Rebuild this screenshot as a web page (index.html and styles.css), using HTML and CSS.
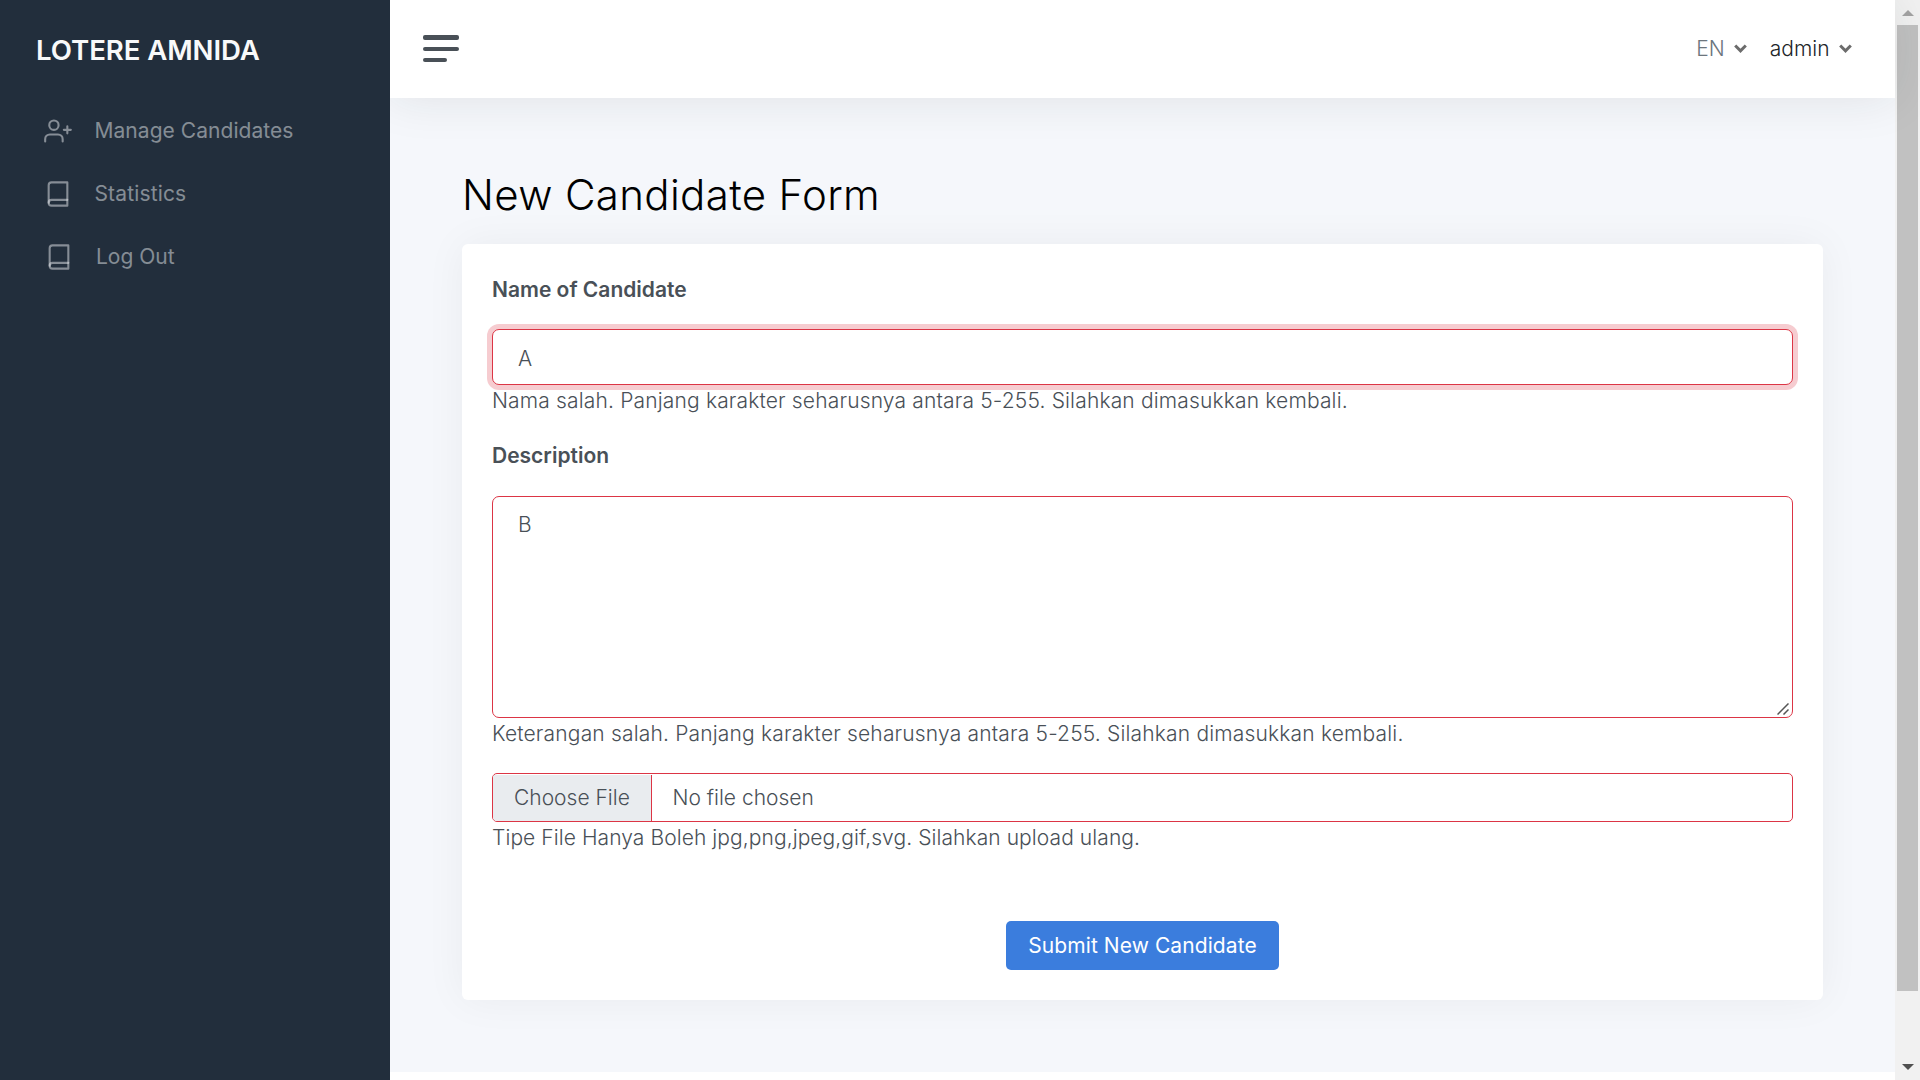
FILE: index.html
```html
<!DOCTYPE html>
<html lang="en">
<head>
<meta charset="utf-8">
<title>New Candidate Form</title>
<link rel="stylesheet" href="styles.css">
</head>
<body>
<div class="wrapper">
  <nav class="sidebar">
    <a class="brand">LOTERE AMNIDA</a>
    <ul class="menu">
      <li class="menu-item"><svg class="icon" viewBox="0 0 24 24"><path d="M16 21v-2a4 4 0 0 0-4-4H5a4 4 0 0 0-4 4v2"/><circle cx="8.5" cy="7" r="4"/><path d="M20 8v6M23 11h-6"/></svg><span class="menu-wide">Manage Candidates</span></li>
      <li class="menu-item"><svg class="icon" viewBox="0 0 24 24"><path d="M4 19.5A2.5 2.5 0 0 1 6.5 17H20"/><path d="M6.5 2H20v20H6.5A2.5 2.5 0 0 1 4 19.5v-15A2.5 2.5 0 0 1 6.5 2z"/></svg><span class="menu-stat">Statistics</span></li>
      <li class="menu-item menu-item-shifted"><svg class="icon" viewBox="0 0 24 24"><path d="M4 19.5A2.5 2.5 0 0 1 6.5 17H20"/><path d="M6.5 2H20v20H6.5A2.5 2.5 0 0 1 4 19.5v-15A2.5 2.5 0 0 1 6.5 2z"/></svg><span>Log Out</span></li>
    </ul>
  </nav>
  <div class="main">
    <header class="topbar">
      <div class="hamburger"><i></i><i></i><i class="short"></i></div>
      <div class="topnav">
        <span class="lang">EN</span><svg class="chevron" viewBox="0 0 13 9"><path d="M1.2 1.5l5.3 5.3 5.3-5.3"/></svg>
        <span class="user">admin</span><svg class="chevron" viewBox="0 0 13 9"><path d="M1.2 1.5l5.3 5.3 5.3-5.3"/></svg>
      </div>
    </header>
    <main class="content">
      <h1>New Candidate Form</h1>
      <form class="card">
        <label class="label" for="name">Name of Candidate</label>
        <input id="name" class="control control-focus" value="A">
        <p class="feedback">Nama salah. Panjang karakter seharusnya antara 5-255. Silahkan dimasukkan kembali.</p>
        <label class="label label-desc" for="desc">Description</label>
        <div class="area">
          <textarea id="desc" class="control">B</textarea>
          <svg class="grip" viewBox="0 0 12 12"><path d="M.5 11.5l11-11M6.5 11.5l5-5"/></svg>
        </div>
        <p class="feedback feedback-desc">Keterangan salah. Panjang karakter seharusnya antara 5-255. Silahkan dimasukkan kembali.</p>
        <div class="file"><span class="file-button">Choose File</span><span class="file-name">No file chosen</span></div>
        <p class="feedback feedback-file">Tipe File Hanya Boleh jpg,png,jpeg,gif,svg. Silahkan upload ulang.</p>
        <button type="button" class="submit">Submit New Candidate</button>
      </form>
    </main>
  </div>
  <div class="scrollbar">
    <svg class="arrow arrow-up" viewBox="0 0 12 6"><path d="M0 6 6 0l6 6z"/></svg>
    <div class="thumb"></div>
    <svg class="arrow arrow-down" viewBox="0 0 12 6"><path d="M0 0h12L6 6z"/></svg>
  </div>
</div>
</body>
</html>
```
FILE: styles.css
```css
* { box-sizing: border-box; }
body { margin: 0; overflow: hidden; background: #fff; color: #495057; font: 300 21px/32px Inter, "Liberation Sans", sans-serif; }
.wrapper { display: flex; height: 1080px; }
.sidebar { position: relative; z-index: 1; width: 390px; background: #222e3c; flex: none; }
.brand { display: block; padding: 34px 0 0 36px; color: #f8f9fa; font-size: 27.6px; font-weight: 600; letter-spacing: -.08px; }
.menu { list-style: none; margin: 33px 0 0; padding: 0; }
.menu-item { display: flex; align-items: center; height: 63px; padding-left: 43.5px; gap: 23px; color: rgba(233, 236, 239, .5); font-weight: 400; }
.menu-item-shifted { padding-left: 45px; }
.menu-wide { letter-spacing: .05px; }
.menu-stat { letter-spacing: .15px; }
.icon { width: 28px; height: 28px; fill: none; stroke: currentColor; stroke-width: 1.8; stroke-linecap: round; stroke-linejoin: round; }
.main { flex: 1; display: flex; flex-direction: column; }
.topbar { position: relative; height: 98px; flex: none; display: flex; justify-content: space-between; padding: 0 43px 0 33px; background: #fff; box-shadow: 0 0 48px 0 rgba(33, 37, 41, .1); }
.hamburger { padding-top: 35px; display: flex; flex-direction: column; gap: 7px; }
.hamburger i { width: 36px; height: 4px; border-radius: 2px; background: #495057; }
.hamburger i:first-child { height: 5px; }
.hamburger .short { width: 24px; }
.topnav { display: flex; align-items: center; }
.lang { color: #6c757d; }
.user { color: #212529; margin-left: 22.5px; }
.chevron { width: 13px; height: 9px; margin: 0 0 1px 9.5px; fill: none; stroke: #6c6c6c; stroke-width: 3; }
.content { height: 974px; padding: 72px 72px 0; background: #f5f7fb; }
h1 { margin: 0 0 24px; font-size: 42px; line-height: 50px; font-weight: 300; letter-spacing: .35px; color: #000; }
.card { height: 756px; padding: 30px; border-radius: 6px; background: #fff; box-shadow: 0 0 42px rgba(33, 37, 41, .05); display: flex; flex-direction: column; }
.label { display: block; height: 32px; margin-bottom: 23px; font-weight: 600; }
.label-desc { margin-top: 23px; margin-bottom: 24px; }
.control { display: block; width: 100%; height: 56px; padding: 10px 25px 8px; border: 1px solid #dc3545; border-radius: 7px; outline: 0; background: #fff; color: #495057; font: inherit; }
.control-focus { box-shadow: 0 0 0 5px rgba(220, 53, 69, .25); }
.area { position: relative; }
.area .control { height: 222px; padding-top: 12px; resize: none; }
.grip { position: absolute; right: 4px; bottom: 3px; width: 12px; height: 12px; stroke: #555; stroke-width: 1.5; }
.feedback { margin: 0; height: 32px; letter-spacing: .16px; }
.feedback-desc { letter-spacing: .17px; }
.feedback-file { letter-spacing: .075px; }
.file { display: flex; height: 49px; margin-top: 23px; border: 1px solid #dc3545; border-radius: 5px; overflow: hidden; line-height: 47px; }
.file-button { width: 159px; padding-left: 21px; margin-top: 1px; line-height: 46px; background: #e9ecef; border-right: 1px solid #dc3545; }
.file-name { padding-left: 20.5px; }
.submit { align-self: center; width: 273px; height: 49px; margin-top: 67px; padding: 0; border: 0; border-radius: 5px; background: #3b7ddd; color: #fff; font: inherit; font-weight: 400; letter-spacing: .08px; }
.scrollbar { width: 25px; flex: none; padding: 10px 2px 10px; background: #f1f1f1; display: flex; flex-direction: column; align-items: center; }
.arrow { width: 12px; height: 6px; fill: #a3a3a3; }
.thumb { width: 21px; height: 966px; margin-top: 9px; background: #c1c1c1; }
.arrow-down { margin-top: auto; fill: #505050; }
```
